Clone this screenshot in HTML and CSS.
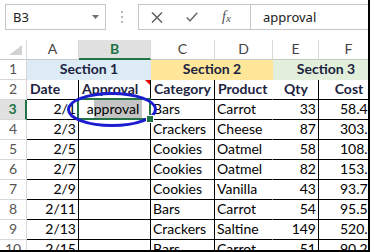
FILE: index.html
```html
<!DOCTYPE html>
<html>
<head>
<meta charset="utf-8">
<link rel="stylesheet" href="styles.css">
</head>
<body>
<div class="frame">
  <div class="fbar">
    <div class="namebox">
      <span>B3</span>
      <svg class="dd" width="7" height="4" viewBox="0 0 7 4"><polygon points="0,0 7,0 3.5,4" fill="#707070"/></svg>
    </div>
    <div class="grip">
      <svg width="2" height="12" viewBox="0 0 2 12"><rect x="0" y="0" width="2" height="2" fill="#b8b8b8"/><rect x="0" y="5" width="2" height="2" fill="#b8b8b8"/><rect x="0" y="10" width="2" height="2" fill="#b8b8b8"/></svg>
    </div>
    <div class="fxarea">
      <div class="btns">
        <div class="slot"><svg width="12" height="11" viewBox="0 0 12 11"><path d="M1 0.5 L11 10.5 M11 0.5 L1 10.5" stroke="#606060" stroke-width="1.5" fill="none"/></svg></div>
        <div class="slot"><svg width="12" height="10" viewBox="0 0 12 10"><path d="M0.8 5.5 L4 8.8 L11.2 0.8" stroke="#707070" stroke-width="1.6" fill="none"/></svg></div>
        <div class="slot"><span class="fx">f<span class="fxs">x</span></span></div>
      </div>
      <div class="finput">approval</div>
    </div>
  </div>

  <div class="sheet">
    <div class="ch corner"><svg class="tri" width="13" height="10" viewBox="0 0 13 10"><polygon points="0,10 13,10 13,0" fill="#d2d2d2"/></svg></div>
    <div class="ch">A</div>
    <div class="ch sel">B</div>
    <div class="ch">C</div>
    <div class="ch">D</div>
    <div class="ch">E</div>
    <div class="ch">F</div>

    <div class="rh">1</div>
    <div class="sec s1">Section 1</div>
    <div class="sec s2">Section 2</div>
    <div class="sec s3">Section 3</div>

    <div class="rh">2</div>
    <div class="cell hd">Date</div>
    <div class="cell hd note">Approval</div>
    <div class="cell hd">Category</div>
    <div class="cell hd nr">Product</div>
    <div class="cell hd ctr">Qty</div>
    <div class="cell hd ctr">Cost</div>

    <div class="rh sel">3</div>
    <div class="cell r">2/1</div>
    <div class="cell ctr active">a<span class="hl">pproval</span></div>
    <div class="cell">Bars</div>
    <div class="cell nr">Carrot</div>
    <div class="cell r">33</div>
    <div class="cell cost">58.41</div>

    <div class="rh">4</div>
    <div class="cell r">2/3</div>
    <div class="cell"></div>
    <div class="cell">Crackers</div>
    <div class="cell nr">Cheese</div>
    <div class="cell r">87</div>
    <div class="cell cost">303.63</div>

    <div class="rh">5</div>
    <div class="cell r">2/5</div>
    <div class="cell"></div>
    <div class="cell">Cookies</div>
    <div class="cell nr">Oatmel</div>
    <div class="cell r">58</div>
    <div class="cell cost">108.46</div>

    <div class="rh">6</div>
    <div class="cell r">2/7</div>
    <div class="cell"></div>
    <div class="cell">Cookies</div>
    <div class="cell nr">Oatmel</div>
    <div class="cell r">82</div>
    <div class="cell cost">153.34</div>

    <div class="rh">7</div>
    <div class="cell r">2/9</div>
    <div class="cell"></div>
    <div class="cell">Cookies</div>
    <div class="cell nr">Vanilla</div>
    <div class="cell r">43</div>
    <div class="cell cost">93.74</div>

    <div class="rh">8</div>
    <div class="cell r">2/11</div>
    <div class="cell"></div>
    <div class="cell">Bars</div>
    <div class="cell nr">Carrot</div>
    <div class="cell r">54</div>
    <div class="cell cost">95.58</div>

    <div class="rh">9</div>
    <div class="cell r">2/13</div>
    <div class="cell"></div>
    <div class="cell">Crackers</div>
    <div class="cell nr">Saltine</div>
    <div class="cell r">149</div>
    <div class="cell cost">520.01</div>

    <div class="rh">10</div>
    <div class="cell r">2/15</div>
    <div class="cell"></div>
    <div class="cell">Bars</div>
    <div class="cell nr">Carrot</div>
    <div class="cell r">51</div>
    <div class="cell cost">90.27</div>

    <svg class="ring" width="100" height="44" viewBox="0 0 100 44"><ellipse cx="50" cy="21.5" rx="43.5" ry="16" fill="none" stroke="#1c1cd0" stroke-width="3"/></svg>
  </div>
</div>
</body>
</html>
```

FILE: styles.css
```css
* { box-sizing: border-box; }

body {
  margin: 0;
  background: #fff;
}

.frame {
  width: 370px;
  height: 252px;
  border-right: 2px solid #000;
  border-bottom: 2px solid #000;
  overflow: hidden;
  background: #fff;
}

/* formula bar */
.fbar {
  display: flex;
  height: 26px;
  margin-top: 4px;
  font-family: "Noto Sans", "Open Sans", sans-serif;
  font-size: 13px;
  color: #222;
}

.namebox {
  margin-left: 5px;
  width: 101px;
  height: 26px;
  border: 1px solid #c6c6c6;
  display: flex;
  align-items: center;
  justify-content: space-between;
  padding: 0 6px 0 7px;
}

.grip {
  width: 32px;
  display: flex;
  align-items: center;
  justify-content: center;
}

.fxarea {
  flex: 1;
  display: flex;
  height: 26px;
  border: 1px solid #c6c6c6;
  border-right: none;
}

.btns {
  width: 111px;
  display: flex;
  align-items: center;
}

.slot {
  width: 35px;
  height: 100%;
  display: flex;
  align-items: center;
  justify-content: center;
}

.fx {
  font-family: "Liberation Serif", serif;
  font-style: italic;
  font-size: 14px;
  color: #505050;
  line-height: 1;
}

.fxs {
  font-size: 11px;
  position: relative;
  top: 1px;
}

.finput {
  flex: 1;
  border-left: 1px solid #c6c6c6;
  padding-left: 12px;
  display: flex;
  align-items: center;
}

/* sheet */
.sheet {
  position: relative;
  margin-top: 10px;
  width: 379px;
  display: grid;
  grid-template-columns: 27px 52px 72px 64px 58px 46px 60px;
  grid-auto-rows: 20px;
  font-family: Lato, "Liberation Sans", sans-serif;
  font-size: 14px;
  color: #000;
}

.ch {
  border-right: 1px solid #d8d8d8;
  border-bottom: 1px solid #c8c8c8;
  text-align: center;
  line-height: 18px;
  color: #444;
  font-size: 14px;
}

.ch.corner {
  position: relative;
}

.tri {
  position: absolute;
  right: 4px;
  bottom: 4px;
}

.ch.sel {
  background: #e1e1e1;
  color: #217346;
  font-weight: bold;
  border-bottom: 2px solid #217346;
}

.rh {
  border-right: 1px solid #d8d8d8;
  border-bottom: 1px solid #d8d8d8;
  text-align: center;
  line-height: 18px;
  color: #555;
  font-size: 14px;
}

.rh.sel {
  background: #e1e1e1;
  color: #217346;
  font-weight: bold;
  border-right: 2px solid #217346;
}

.sec {
  grid-column: span 2;
  text-align: center;
  font-weight: bold;
  line-height: 18px;
  color: #1c2340;
}

.s1 { background: #ddebf7; }
.s2 { background: #ffe699; }
.s3 { background: #e2efda; }

.cell {
  border-right: 1px solid #000;
  border-bottom: 1px solid #000;
  padding: 0 2px;
  line-height: 18px;
  white-space: nowrap;
  overflow: hidden;
}

.cell.nr { border-right-color: transparent; }
.cell.r { text-align: right; }
.cell.ctr { text-align: center; }
.cell.hd { font-weight: bold; color: #1c2340; padding-left: 3px; }
.cell.cost { padding-left: 21px; }

.cell.note { position: relative; }
.cell.note::after {
  content: "";
  position: absolute;
  top: 0;
  right: 0;
  border-top: 5px solid #e60000;
  border-left: 5px solid transparent;
}

.cell.active {
  position: relative;
  overflow: visible;
}
.cell.active::after {
  content: "";
  position: absolute;
  left: -2px;
  top: -2px;
  right: -1px;
  bottom: -1px;
  border: 2px solid #217346;
}
.cell.active::before {
  content: "";
  position: absolute;
  right: -4px;
  bottom: -4px;
  width: 6px;
  height: 6px;
  background: #217346;
  border: 1px solid #fff;
  z-index: 1;
}

.hl {
  background: #c4c4c4;
  padding-right: 3px;
  display: inline-block;
  line-height: 18px;
}

.ring {
  position: absolute;
  left: 62px;
  top: 48px;
  pointer-events: none;
}
```
